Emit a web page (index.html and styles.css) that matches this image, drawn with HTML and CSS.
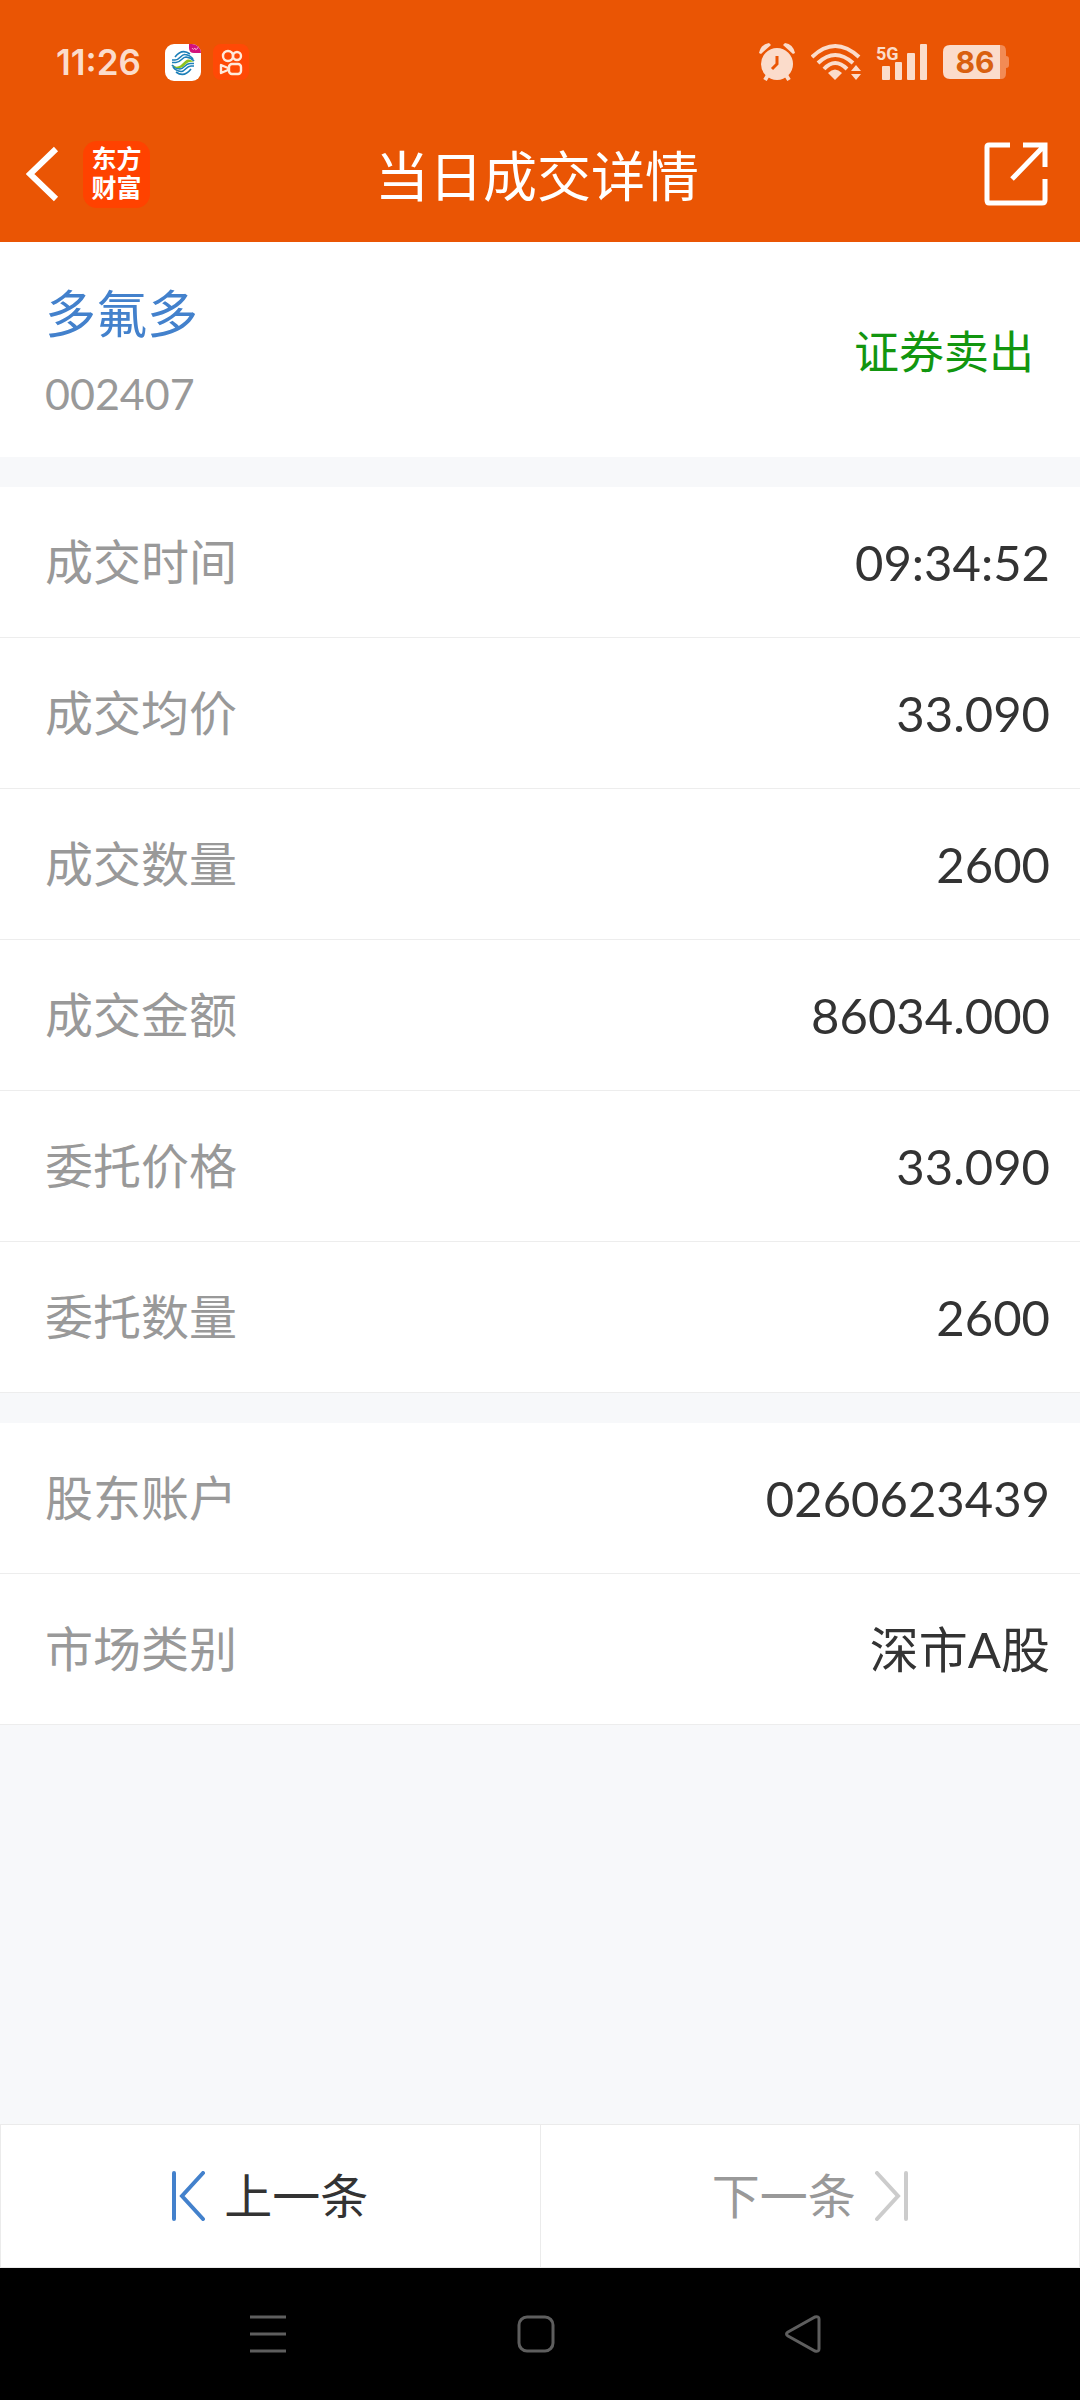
FILE: index.html
```
<!DOCTYPE html>
<html lang="zh-CN">
<head>
    <meta charset="UTF-8">
    <meta name="viewport" content="width=device-width, initial-scale=1.0">
    <title>当日成交详情</title>
    <link rel="stylesheet" href="styles.css">
</head>
<body>

    <header>
        <div class="status-bar">
            <div class="status-left">
                <span class="time">11:26</span>
                <svg width="36" height="37" viewBox="0 0 36 37">
                    <clipPath id="appClip"><rect width="36" height="37" rx="9"/></clipPath>
                    <g clip-path="url(#appClip)">
                        <rect width="36" height="37" fill="#fff"/>
                        <path d="M24 0h12v9h-7q-5 0-5-5z" fill="#d3127c"/>
                        <path d="M27 4q1 3 3 0q0 3 2 1l2-3" fill="none" stroke="#f5a3cf" stroke-width="1"/>
                    </g>
                    <g fill="none" stroke="#1c7fb8" stroke-width="1.6">
                        <path d="M10 13Q17 4 25 10"/>
                        <path d="M7 16h3C15 16 16 10 20 10.500Q25 11 28 15"/>
                        <path d="M7 18.500h4C16 18.500 17 13 21 13Q26 13.500 29 17"/>
                        <path d="M26 25Q19 34 11 28"/>
                        <path d="M29 22h-3C21 22 20 28 16 27.500Q11 27 8 23"/>
                        <path d="M29 19.500h-4C20 19.500 19 25 15 25Q10 24.500 7 21"/>
                    </g>
                    <path d="M7 20.500C10 24 14 23 17 20C20 17 22 15 24 15.500Q27 16 29 18C24 17 22 19 20 21C16 25 11 26 7 20.500z" fill="#8dc21f"/>
                </svg>
                <svg width="36" height="36" viewBox="0 0 36 36">
                    <rect width="36" height="36" rx="8" fill="#ff4906"/>
                    <g fill="none" stroke="#ffe9dc" stroke-width="2.400">
                        <circle cx="15" cy="12" r="5"/>
                        <circle cx="24" cy="12" r="4"/>
                        <rect x="16" y="20" width="12" height="10" rx="3"/>
                        <path d="M8 21v8l7-3v-2z" stroke-linejoin="round"/>
                    </g>
                </svg>
            </div>
            <div class="status-right">
                <svg width="38" height="38" viewBox="0 0 38 38">
                    <g fill="#fbdccb">
                        <circle cx="19" cy="21" r="16"/>
                        <path d="M1 10Q3 1 11 0L13 2L3 11z"/>
                        <path d="M37 10Q35 1 27 0L25 2L35 11z"/>
                    </g>
                    <path d="M10 32l-3 5M28 32l3 5" stroke="#fbdccb" stroke-width="4"/>
                    <path d="M19 13v8l-5 5" fill="none" stroke="#ea5504" stroke-width="3"/>
                </svg>
                <svg width="50" height="38" viewBox="1 0 50 38">
                    <g fill="none" stroke="#fbdccb" stroke-width="4">
                        <path d="M2 14Q25-8 49 14"/>
                        <path d="M8 20Q25 4 43 20"/>
                        <path d="M14 26Q25 14 37 26"/>
                    </g>
                    <g fill="#fbdccb">
                        <path d="M18 30q7-7 14 0l-7 7z"/>
                        <path d="M41 28l5-6l5 6zM41 31l5 6l5-6z"/>
                    </g>
                </svg>
                <svg width="52" height="38" viewBox="0 0 52 38">
                    <text class="network" x="0" y="17">5G</text>
                    <g fill="#fbdccb">
                        <rect x="6" y="23" width="8" height="14" rx="1"/>
                        <rect x="19" y="19" width="7" height="18" rx="1"/>
                        <rect x="31" y="10" width="8" height="27" rx="1"/>
                        <rect x="44" y="1" width="7" height="36" rx="1"/>
                    </g>
                </svg>
                <svg width="66" height="38" viewBox="0 -2 66 38">
                    <path d="M57 0h1q5 0 5 6v5q3 0 3 3v6q0 3-3 3v5q0 6-5 6h-1z" fill="#f28b55"/>
                    <path d="M57 0H7Q0 0 0 7v20q0 7 7 7h50z" fill="#fbdccb"/>
                    <text class="battery" x="32" y="28" text-anchor="middle">86</text>
                </svg>
            </div>
        </div>
        <div class="title-bar">
            <div class="title-side">
                <button class="icon-btn" aria-label="返回">
                    <svg width="33" height="56" viewBox="0 0 33 56">
                        <path d="M30 3L4 28L30 53" fill="none" stroke="#fff" stroke-width="6"/>
                    </svg>
                </button>
                <a href="#" class="logo">东方<br>财富</a>
            </div>
            <h1>当日成交详情</h1>
            <div class="title-side title-end">
                <button class="icon-btn" aria-label="分享">
                    <svg width="64" height="64" viewBox="0 0 64 64">
                        <path d="M26 3H5Q3 3 3 5V58Q3 61 5 61H58Q61 61 61 58V37M39 3H61V25M61 3L28 37" fill="none" stroke="#fff" stroke-width="5"/>
                    </svg>
                </button>
            </div>
        </div>
    </header>

    <main>
        <section class="stock">
            <div class="stock-info">
                <h2>多氟多</h2>
                <p class="code">002407</p>
            </div>
            <span class="trade-type">证券卖出</span>
        </section>

        <dl class="detail-list">
            <div class="row"><dt>成交时间</dt><dd>09:34:52</dd></div>
            <div class="row"><dt>成交均价</dt><dd>33.090</dd></div>
            <div class="row"><dt>成交数量</dt><dd>2600</dd></div>
            <div class="row"><dt>成交金额</dt><dd>86034.000</dd></div>
            <div class="row"><dt>委托价格</dt><dd>33.090</dd></div>
            <div class="row"><dt>委托数量</dt><dd>2600</dd></div>
        </dl>

        <dl class="detail-list">
            <div class="row"><dt>股东账户</dt><dd>0260623439</dd></div>
            <div class="row"><dt>市场类别</dt><dd>深市A股</dd></div>
        </dl>
    </main>

    <div class="pager">
        <button class="pager-btn">
            <svg width="34" height="50" viewBox="0 0 34 50">
                <path d="M2 2V48M31 2L10 25L31 48" fill="none" stroke="#4381cc" stroke-width="4" stroke-linecap="round"/>
            </svg>
            上一条
        </button>
        <button class="pager-btn" disabled>
            下一条
            <svg width="34" height="50" viewBox="0 0 34 50">
                <path d="M32 2V48M3 2L24 25L3 48" fill="none" stroke="#ccc" stroke-width="4" stroke-linecap="round"/>
            </svg>
        </button>
    </div>

    <!-- system navigation -->
    <nav class="system-nav">
        <button class="icon-btn" aria-label="菜单">
            <svg width="38" height="38" viewBox="0 0 38 38">
                <path d="M1 2H37M1 19H37M1 36H37" stroke="#5e5e5e" stroke-width="3"/>
            </svg>
        </button>
        <button class="icon-btn" aria-label="主页">
            <svg width="38" height="38" viewBox="0 0 38 38">
                <rect x="2" y="2" width="34" height="34" rx="8" fill="none" stroke="#5e5e5e" stroke-width="3"/>
            </svg>
        </button>
        <button class="icon-btn" aria-label="后退">
            <svg width="38" height="38" viewBox="0 0 38 38">
                <path d="M4 17L31 2Q35 1 35 4V34Q35 37 31 36L4 21Q1 19 4 17z" fill="none" stroke="#5e5e5e" stroke-width="3"/>
            </svg>
        </button>
    </nav>

</body>
</html>
```
FILE: styles.css
```
* {
    box-sizing: border-box;
}
body {
    font-family: Lato, "Noto Sans CJK SC", sans-serif;
    margin: 0;
    min-height: 100vh;
    display: flex;
    flex-direction: column;
    background-color: #f7f8fa;
    color: #333;
}
h1, h2, p, dl, dd {
    margin: 0;
    font-weight: normal;
}
svg {
    display: block;
}
button {
    font-family: inherit;
    background: none;
    border: none;
    padding: 0;
    cursor: pointer;
}
header {
    background-color: #ea5504;
    color: white;
}
.status-bar {
    display: flex;
    justify-content: space-between;
    align-items: center;
    height: 108px;
    padding: 16px 71px 0 56px;
}
.status-left, .status-right {
    display: flex;
    align-items: center;
}
.status-left {
    gap: 12px;
}
.status-right {
    gap: 15px;
}
.time {
    font: 600 35px/40px Inter, sans-serif;
    color: #fbdccb;
    margin-right: 12px;
}
.network {
    font: bold 18px Roboto, sans-serif;
    fill: #fbdccb;
}
.battery {
    font: bold 30px Inter, sans-serif;
    fill: #d9600f;
}
.title-bar {
    display: flex;
    align-items: center;
    height: 134px;
    padding: 0 32px 2px 26px;
}
.title-bar h1 {
    padding-top: 6px;
    font-size: 54px;
    line-height: 80px;
}
.title-side {
    display: flex;
    flex: 1;
    align-items: center;
    gap: 24px;
}
.title-end {
    justify-content: flex-end;
}
.logo {
    width: 67px;
    height: 67px;
    padding: 4px 0;
    border-radius: 14px;
    background-color: #ff4200;
    color: white;
    font: bold 25px/29px "Liberation Sans", "Noto Sans CJK SC", sans-serif;
    text-align: center;
    text-decoration: none;
}
.stock {
    display: flex;
    justify-content: space-between;
    align-items: center;
    height: 215px;
    padding: 0 46px 0 45px;
    background-color: white;
}
.stock-info {
    padding-top: 8px;
}
.stock h2 {
    font-size: 51px;
    line-height: 80px;
    color: #4381cc;
}
.code {
    font-size: 43px;
    line-height: 80px;
    color: #999;
}
.trade-type {
    font-size: 45px;
    color: #12960f;
}
.detail-list {
    margin-top: 30px;
    background-color: white;
}
.row {
    display: flex;
    justify-content: space-between;
    align-items: center;
    height: 151px;
    padding: 0 30px 0 45px;
    line-height: 60px;
    border-bottom: 1px solid #ededed;
}
.row dt {
    font-size: 48px;
    color: #999;
}
.row dd {
    font-size: 49px;
}
.pager {
    display: flex;
    height: 144px;
    margin-top: auto;
    background-color: white;
    border: 1px solid #ebebeb;
}
.pager-btn {
    flex: 1;
    display: flex;
    justify-content: center;
    align-items: center;
    gap: 18px;
    font-size: 48px;
    line-height: 60px;
    color: #333;
}
.pager-btn:disabled {
    color: #999;
    border-left: 1px solid #ebebeb;
}
.system-nav {
    display: flex;
    justify-content: space-between;
    align-items: center;
    height: 132px;
    padding: 0 258px 0 249px;
    background-color: black;
}
```
